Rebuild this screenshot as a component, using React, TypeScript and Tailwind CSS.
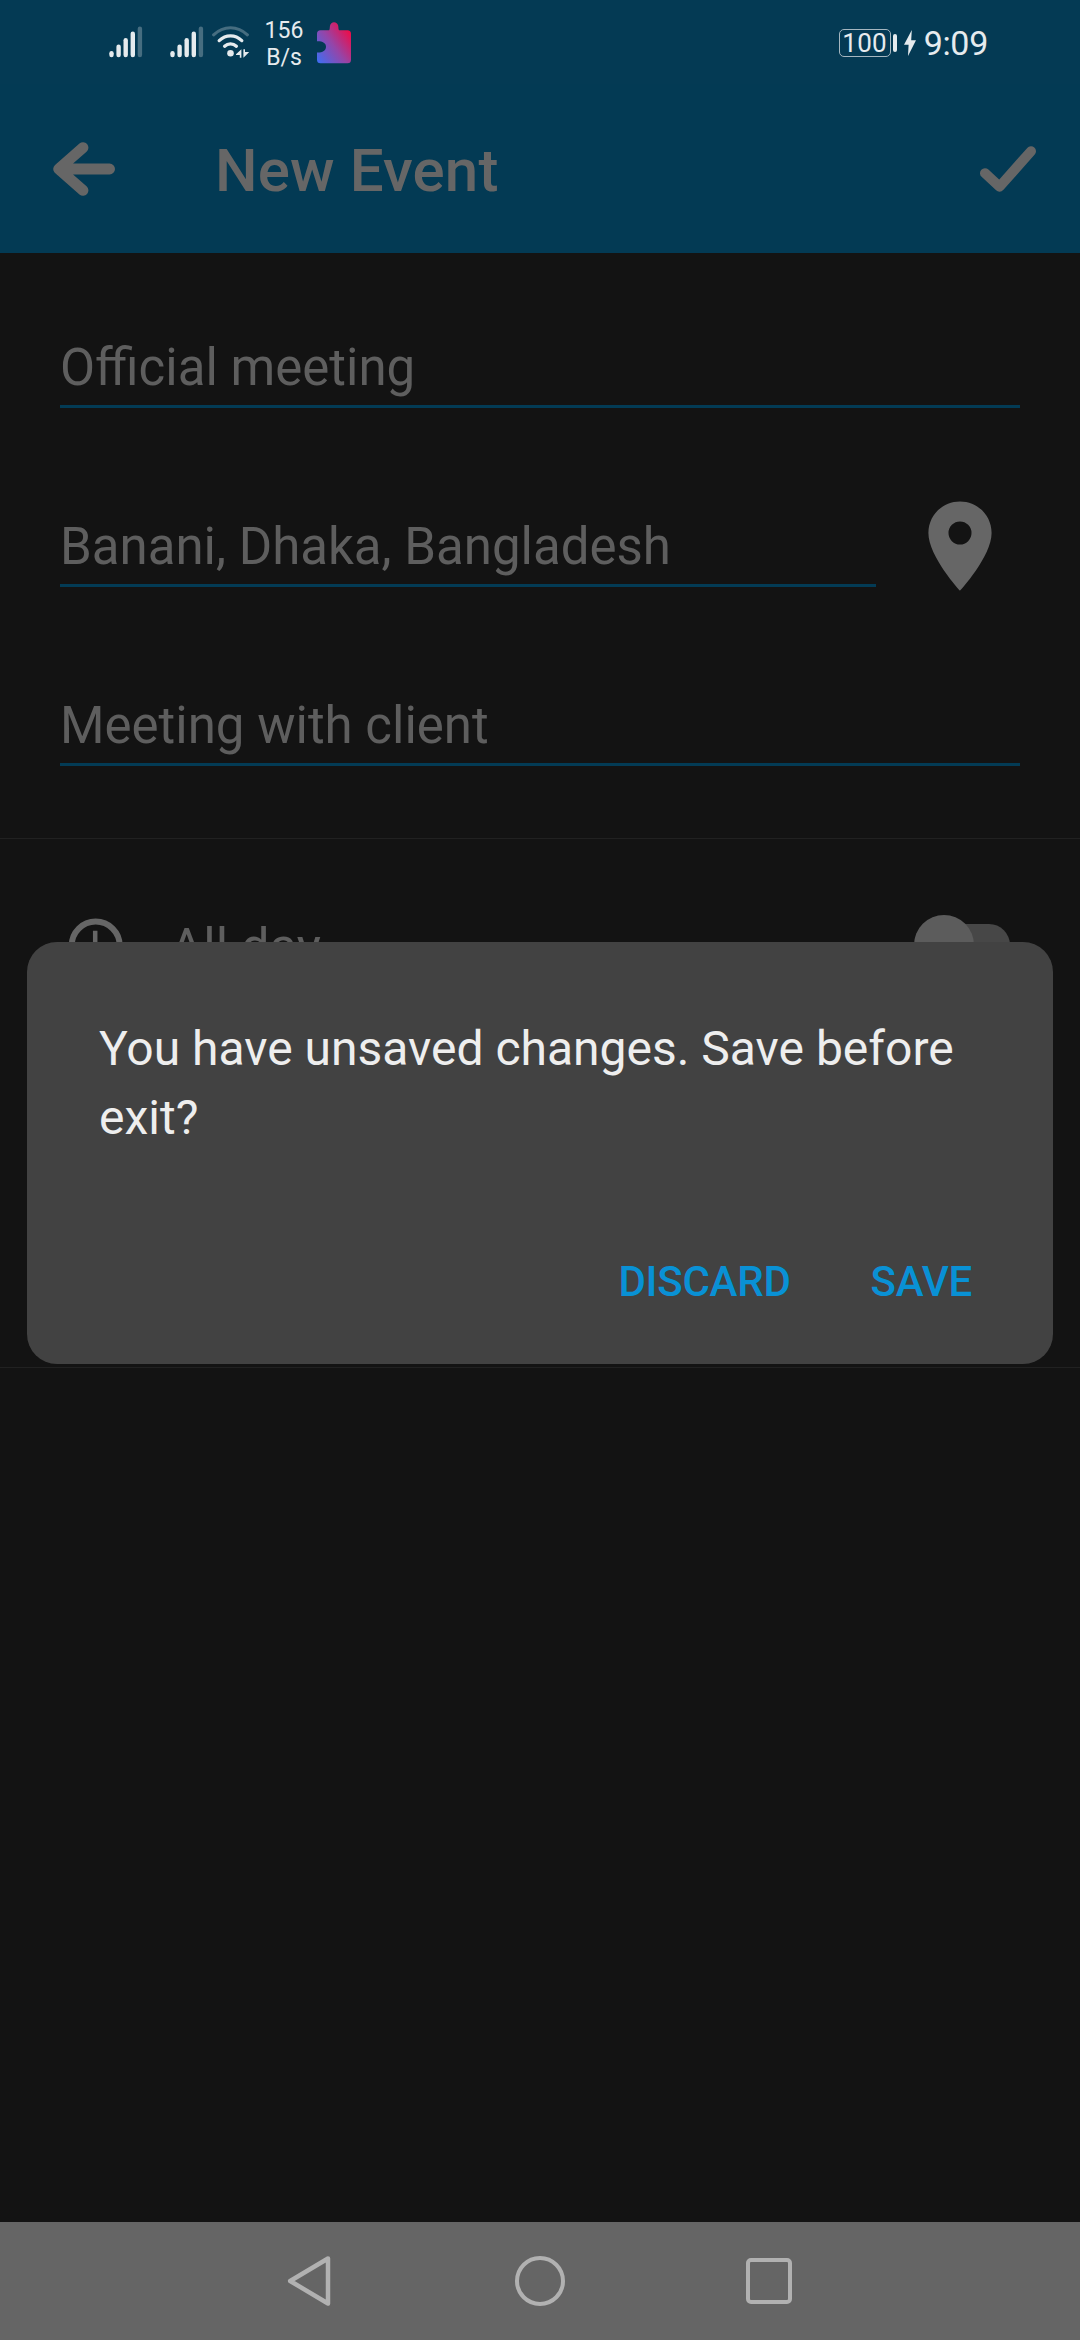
import type { ReactNode } from "react";

function Signal() {
  const bars = [
    { x: 0, y: 25 },
    { x: 7.1, y: 18.5 },
    { x: 14.2, y: 12 },
    { x: 21.3, y: 5.5 },
    { x: 28.4, y: 0.5 },
  ];
  return (
    <svg className="h-8 w-8.5 shrink-0" viewBox="0 0 34 32">
      {bars.map((b, i) => (
        <rect
          key={b.x}
          x={b.x + 0.3}
          y={b.y}
          width="4.4"
          height={31.3 - b.y}
          rx="2.2"
          fill={i === 4 ? "#466d80" : "#e6ebee"}
        />
      ))}
    </svg>
  );
}

function Wifi() {
  return (
    <svg className="h-8 w-9.5 shrink-0" viewBox="0 0 38 32" fill="none" strokeLinecap="round">
      <path d="M1.6 8.8C11.5-0.7 25.5-0.7 35.4 8.8" stroke="#466d80" strokeWidth="3.1" />
      <path d="M7.2 14.6C13.8 8.3 23.2 8.3 29.8 14.6" stroke="#e6ebee" strokeWidth="3.3" />
      <path d="M12.6 20.2C16 17 21 17 24.4 20.2" stroke="#e6ebee" strokeWidth="3.3" />
      <circle cx="18.5" cy="27.3" r="3.3" fill="#e6ebee" />
      <path d="M24 28.3L29.4 23.3V31.8H27.8V28.9H24ZM31.4 31.8V23.3H33V26H37.2L33 30.3Z" fill="#e6ebee" />
    </svg>
  );
}

function Puzzle() {
  return (
    <svg className="h-[42px] w-[34px] shrink-0" viewBox="0 0 34 42">
      <defs>
        <linearGradient id="puzzle" x1="0" y1="1" x2="1" y2="0.15">
          <stop offset="0" stopColor="#3b6ff5" />
          <stop offset="0.5" stopColor="#9545a8" />
          <stop offset="1" stopColor="#f8063d" />
        </linearGradient>
      </defs>
      <path
        d="M3.5 8.3H12.2C13 7.2 12.6 5.8 13 3.8C13.5 1.6 15 .2 17 .2S20.7 1.6 21.2 3.8C21.6 5.8 21.2 7.2 22 8.3H30.5Q34 8.3 34 11.8V37.8Q34 41.3 30.5 41.3H3.5Q0 41.3 0 37.8V30.6C5.5 30.8 9 28.6 9 24.8S5.500 19.100 0 19.300V11.800Q0 8.300 3.500 8.300Z"
        fill="url(#puzzle)"
      />
    </svg>
  );
}

function StatusBar() {
  return (
    <div className="flex h-[84px] items-start bg-[#043a54] text-[#e6ebee]">
      <div className="flex items-start pt-[26px] pl-[109px]">
        <Signal />
        <div className="ml-[27px] flex">
          <Signal />
        </div>
        <div className="ml-[8px] flex">
          <Wifi />
        </div>
      </div>
      <div className="ml-[9px] w-[50px] pt-[17px] text-center text-[23px] leading-[27px]">
        <div>156</div>
        <div>B/s</div>
      </div>
      <div className="ml-[8px] pt-[22px]">
        <Puzzle />
      </div>
      <div className="ml-auto flex items-center pt-[24px] pr-[92px]">
        <div className="flex h-[28px] w-[52px] items-center justify-center rounded-[5px] border-[1.5px] border-[#a5b6c0] text-[26px] leading-[26px] tracking-[0.3px]">
          100
        </div>
        <div className="ml-[2px] h-[18px] w-[4px] rounded-[2px] bg-[#e6ebee]" />
        <svg className="ml-[7px] h-[26px] w-[12px]" viewBox="0 0 12 26">
          <path d="M7.8 0L0 14.7H4.6L4 26L12 10.3H7.2Z" fill="#e6ebee" />
        </svg>
        <div className="ml-[8px] text-[34px] leading-[38px] tracking-[-0.3px]">9:09</div>
      </div>
    </div>
  );
}

function Field({ children, className = "" }: { children: ReactNode; className?: string }) {
  return (
    <div className={`h-[75px] border-b-[3px] border-[#033b55] text-[51px] leading-[69px] whitespace-nowrap text-[#5e5e5e] ${className}`}>
      {children}
    </div>
  );
}

export default function App() {
  return (
    <div className="relative flex h-[2340px] w-[1080px] flex-col overflow-hidden bg-[#131313] font-['Roboto',sans-serif]">
      <StatusBar />
      <header className="flex h-[169px] items-center bg-[#033a54] text-[#666666]">
        <svg className="ml-[53px] h-[54px] w-[62px]" viewBox="0 0 62 54" fill="none" stroke="currentColor" strokeWidth="10.8" strokeLinecap="round" strokeLinejoin="round">
          <path d="M30 5.6L5.6 27L30 48.4M8 27H56.6" />
        </svg>
        <h1 className="ml-[100px] pt-[5px] text-[60px] leading-[72px] font-medium tracking-[0.15px]">New Event</h1>
        <svg className="mr-[44px] ml-auto h-[46px] w-[56px]" viewBox="0 0 56 46" fill="none" stroke="currentColor" strokeWidth="10" strokeLinecap="round" strokeLinejoin="round">
          <path d="M5 27.2L19.5 40.7L51 5.2" />
        </svg>
      </header>

      <section className="flex h-[586px] flex-col gap-[104px] border-b border-[#212121] pt-[80px] pr-[60px] pl-[60px]">
        <Field>Official meeting</Field>
        <div className="flex h-[75px]">
          <Field className="w-[816px]">Banani, Dhaka, Bangladesh</Field>
          <svg className="mt-[-11.5px] ml-[52px] h-[90px] w-[64px]" viewBox="0 0 64 90">
            <path
              fillRule="evenodd"
              fill="#666666"
              d="M32 .4C14.3.4.4 14.5.4 32C.4 55.5 32 89.700 32 89.700S63.600 55.500 63.600 32C63.600 14.500 49.700.4 32 .4ZM32 20.500A11.500 11.500 0 1 1 32 43.500A11.500 11.500 0 1 1 32 20.500Z"
            />
          </svg>
        </div>
        <Field>Meeting with client</Field>
      </section>

      <section className="flex h-[529px] items-start border-b border-[#212121] pt-[74px] pr-[70px] pl-[66px]">
        <svg className="mt-[2px] h-[60px] w-[60px]" viewBox="0 0 60 60" fill="none" stroke="#666666">
          <circle cx="29.7" cy="30.5" r="24" strokeWidth="6" />
          <path d="M29.2 15.7V31.5L40 38" strokeWidth="4.5" />
        </svg>
        <div className="ml-[44px] text-[51px] leading-[69px] text-[#5e5e5e]">All day</div>
        <div className="relative mt-[11px] ml-auto h-[42px] w-[90px] rounded-full bg-[#474747]">
          <div className="absolute top-[-9px] left-[-6px] size-[60px] rounded-full bg-[#5c5c5c]" />
        </div>
      </section>

      <footer className="mt-auto flex h-[118px] items-center justify-center bg-[#656565]">
        <svg className="h-[54px] w-[46px]" viewBox="0 0 46 54" fill="none" stroke="#b1b1b1" strokeWidth="4.5" strokeLinejoin="round">
          <path d="M42 4.5L4.2 27L42 49.5Z" />
        </svg>
        <div className="ml-[183px] size-[50px] rounded-full border-[4.5px] border-[#b1b1b1]" />
        <div className="mr-[2px] ml-[181px] size-[46px] rounded-[5px] border-[4.5px] border-[#b1b1b1]" />
      </footer>

      <div role="dialog" className="absolute top-[942px] left-[27px] flex h-[422px] w-[1026px] flex-col rounded-[30px] bg-[#424242] px-[72px] pt-[72px]">
        <p className="text-[48px] leading-[69px] text-[#eeeeee]">
          You have unsaved changes. Save before
          <br />
          exit?
        </p>
        <div className="mt-[105px] flex justify-end gap-[80px] pr-[9px] text-[42px] leading-[50px] font-medium tracking-[-0.25px] text-[#0991d5]">
          <button>DISCARD</button>
          <button>SAVE</button>
        </div>
      </div>
    </div>
  );
}
